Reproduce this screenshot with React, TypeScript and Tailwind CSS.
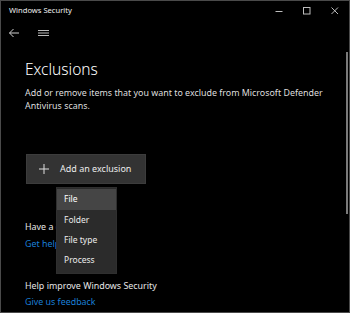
import React from "react";

const font = { fontFamily: '"Noto Sans", "Open Sans", sans-serif' };

const menuItems = ["File", "Folder", "File type", "Process"];

export default function App() {
  return (
    <div
      className="relative flex h-[313px] w-[350px] flex-col overflow-hidden border border-[#4a4a4a] bg-black text-white"
      style={font}
    >
      {/* title bar */}
      <div className="flex h-[20px] shrink-0 items-center">
        <span className="pl-[8px] text-[7.6px] text-[#f0f0f0]">Windows Security</span>
        <div className="ml-auto flex h-full">
          <div className="flex w-[28px] items-center justify-center">
            <svg width="8" height="8" viewBox="0 0 8 8">
              <path d="M0.5 4.5h7" stroke="#bdbdbd" strokeWidth="1" />
            </svg>
          </div>
          <div className="flex w-[28px] items-center justify-center">
            <svg width="8" height="8" viewBox="0 0 8 8">
              <rect x="0.5" y="0.5" width="6.5" height="6.5" fill="none" stroke="#bdbdbd" strokeWidth="1" />
            </svg>
          </div>
          <div className="flex w-[28px] items-center justify-center">
            <svg width="8" height="8" viewBox="0 0 8 8">
              <path d="M0.5 0.5l6.5 6.5M7 0.5L0.5 7" stroke="#bdbdbd" strokeWidth="1" />
            </svg>
          </div>
        </div>
      </div>

      {/* nav row */}
      <div className="flex h-[24px] shrink-0 items-center">
        <svg className="ml-[7px]" width="12" height="10" viewBox="0 0 12 10">
          <path d="M11 5H1.5M5.5 1L1.5 5l4 4" fill="none" stroke="#cfcfcf" strokeWidth="1" />
        </svg>
        <svg className="ml-[18px]" width="11" height="8" viewBox="0 0 11 8">
          <path d="M0 1.5h11M0 4h11M0 6.5h11" stroke="#cfcfcf" strokeWidth="0.9" />
        </svg>
      </div>

      {/* content */}
      <div className="flex flex-col pl-[24px]">
        <h1 className="mt-[14px] text-[15.5px] leading-[20px] font-light text-white">Exclusions</h1>
        <p className="mt-[8px] max-w-[306px] text-[8.9px] leading-[12.5px] text-[#dedede]">
          Add or remove items that you want to exclude from Microsoft Defender Antivirus scans.
        </p>

        <button className="mt-[42px] ml-[1px] flex h-[30px] w-[120px] items-center border border-[#3c3c3c] bg-[#333333] text-[9px] text-[#ececec]">
          <svg className="ml-[12px]" width="10" height="10" viewBox="0 0 10 10">
            <path d="M5 0v10M0 5h10" stroke="#e0e0e0" strokeWidth="1" />
          </svg>
          <span className="ml-[11px]">Add an exclusion</span>
        </button>

        <p className="mt-[36px] text-[8.9px] leading-[13px] text-[#e6e6e6]">Have a question?</p>
        <p className="mt-[4px] text-[8.9px] leading-[13px] text-[#1a7fd6]">Get help</p>

        <p className="mt-[29px] text-[8.9px] leading-[13px] text-[#e6e6e6]">Help improve Windows Security</p>
        <p className="mt-[3px] text-[8.9px] leading-[13px] text-[#1a7fd6]">Give us feedback</p>
      </div>

      {/* scrollbar */}
      <div className="absolute top-[51px] right-[1px] h-[162px] w-[2px] bg-[#7a7a7a]" />

      {/* dropdown menu */}
      <div className="absolute top-[186px] left-[55px] flex w-[61px] flex-col border border-[#2f2f2f] bg-[#2b2b2b] py-[1px]">
        {menuItems.map((item, i) => (
          <div
            key={item}
            className={
              i === 0
                ? "flex h-[21px] items-center bg-[#454545] pl-[7px] text-[8.5px] text-white"
                : "flex h-[20px] items-center pl-[7px] text-[8.5px] text-[#ececec]"
            }
          >
            {item}
          </div>
        ))}
        <div className="h-[2px]" />
      </div>
    </div>
  );
}
